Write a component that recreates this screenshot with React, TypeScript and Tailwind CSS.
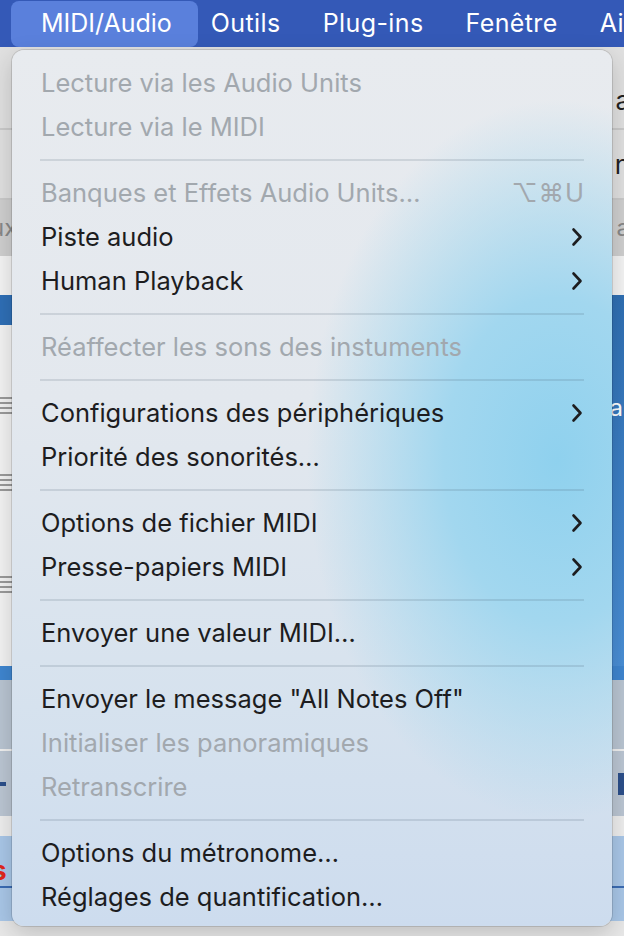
import React from "react";

type Item =
  | { kind: "sep" }
  | { kind: "item"; label: string; disabled?: boolean; sub?: boolean; shortcut?: string };

const items: Item[] = [
  { kind: "item", label: "Lecture via les Audio Units", disabled: true },
  { kind: "item", label: "Lecture via le MIDI", disabled: true },
  { kind: "sep" },
  { kind: "item", label: "Banques et Effets Audio Units…", disabled: true, shortcut: "⌥⌘U" },
  { kind: "item", label: "Piste audio", sub: true },
  { kind: "item", label: "Human Playback", sub: true },
  { kind: "sep" },
  { kind: "item", label: "Réaffecter les sons des instuments", disabled: true },
  { kind: "sep" },
  { kind: "item", label: "Configurations des périphériques", sub: true },
  { kind: "item", label: "Priorité des sonorités…" },
  { kind: "sep" },
  { kind: "item", label: "Options de fichier MIDI", sub: true },
  { kind: "item", label: "Presse-papiers MIDI", sub: true },
  { kind: "sep" },
  { kind: "item", label: "Envoyer une valeur MIDI…" },
  { kind: "sep" },
  { kind: "item", label: 'Envoyer le message "All Notes Off"' },
  { kind: "item", label: "Initialiser les panoramiques", disabled: true },
  { kind: "item", label: "Retranscrire", disabled: true },
  { kind: "sep" },
  { kind: "item", label: "Options du métronome…" },
  { kind: "item", label: "Réglages de quantification…" },
];

function Chevron() {
  return (
    <svg width="14" height="20" viewBox="0 0 14 20" fill="none">
      <path d="M3.5 2.5 L10.5 10 L3.5 17.5" stroke="#1d1d1f" strokeWidth="2.6" strokeLinecap="round" strokeLinejoin="round" />
    </svg>
  );
}

function Lines() {
  return (
    <div className="flex flex-col gap-[3px]">
      <div className="h-[2px] bg-[#9a9a9a]" />
      <div className="h-[2px] bg-[#9a9a9a]" />
      <div className="h-[2px] bg-[#9a9a9a]" />
      <div className="h-[2px] bg-[#9a9a9a]" />
    </div>
  );
}

export default function App() {
  return (
    <div
      className="relative w-[624px] h-[936px] overflow-hidden bg-[#e8e8e8]"
      style={{ fontFamily: "Inter, 'Noto Sans', sans-serif" }}
    >
      {/* Menu bar */}
      <div className="h-[47px] bg-[#3459b7] flex items-center text-white text-[25px] whitespace-nowrap">
        <div className="ml-[11px] h-[46px] w-[189px] rounded-[8px] bg-[#5a80dc] flex items-center pl-[30px]">MIDI/Audio</div>
        <div className="ml-[13px] tracking-[0.4px]">Outils</div>
        <div className="ml-[42px] tracking-[0.4px]">Plug-ins</div>
        <div className="ml-[42px] tracking-[0.4px]">Fenêtre</div>
        <div className="ml-[42px] tracking-[0.4px]">Ai</div>
      </div>

      {/* Background app content */}
      <div className="flex flex-col">
        <div className="h-[83px] bg-[#e0e0e0] border-b-2 border-[#cacaca] flex items-end justify-end pb-[8px] text-[26px] text-[#222]">
          <span className="mr-[-6px]">a</span>
        </div>
        <div className="h-[70px] bg-[#e0e0e0] border-b-2 border-[#cacaca] flex items-center justify-end text-[26px] text-[#222]">
          <span className="mr-[-6px]">n</span>
        </div>
        <div className="h-[56px] bg-[#cfcfcf] flex items-center justify-between text-[24px] text-[#888]">
          <span className="ml-[-10px]">ux</span>
          <span className="mr-[-6px]">a</span>
        </div>
        <div className="h-[39px] bg-[#f4f4f4]" />
        <div className="h-[371px] flex">
          <div className="w-[40px] flex flex-col bg-[#f3f3f3]">
            <div className="h-[30px] bg-[#2f6fb6]" />
            <div className="mt-[72px]"><Lines /></div>
            <div className="mt-[60px]"><Lines /></div>
            <div className="mt-[85px]"><Lines /></div>
          </div>
          <div className="flex-1 bg-[linear-gradient(180deg,#2f6fb3,#4a8fd6)] flex items-start justify-end pt-[95px] text-[24px] text-white">
            <span className="mr-[-8px]">ar</span>
          </div>
        </div>
        <div className="h-[14px] bg-[#3f86d0]" />
        <div className="h-[71px] bg-[#b9c5d2] border-b-2 border-[#f0f0f0]" />
        <div className="h-[65px] bg-[#bbc6d3] flex items-center justify-between">
          <div className="w-[6px] h-[4px] bg-[#2c4f8a]" />
          <div className="w-[6px] h-[22px] bg-[#2c4f8a]" />
        </div>
        <div className="h-[20px] bg-[#eeeeee]" />
        <div className="h-[50px] bg-[#a9c7e8] flex items-end">
          <span className="ml-[-8px] mb-[2px] text-[26px] font-bold text-[#e0261d] leading-none">s</span>
        </div>
        <div className="h-[2px] bg-[#3b6cb4]" />
        <div className="h-[33px] bg-[#a9c7e8]" />
      </div>

      {/* Dropdown menu */}
      <div
        className="absolute left-[12px] top-[50px] w-[600px] rounded-[12px] pt-[11px] pb-[7px] shadow-[0_0_0_1px_rgba(0,0,0,0.12),0_8px_24px_rgba(0,0,0,0.18)] bg-[radial-gradient(ellipse_250px_360px_at_545px_410px,#8fd1ee_0%,#a2d7ef_45%,rgba(200,225,240,0)_100%),linear-gradient(180deg,#e8ebef_0%,#e3e8ee_40%,#d6e2ee_75%,#cddcee_100%)]"
      >
        {items.map((it, i) =>
          it.kind === "sep" ? (
            <div key={i} className="h-[22px] flex items-center px-[28px]">
              <div className="h-[2px] w-full bg-[rgba(60,80,100,0.15)]" />
            </div>
          ) : (
            <div
              key={i}
              className={`h-[44px] flex items-center justify-between pl-[29px] pr-[28px] text-[25.5px] whitespace-nowrap ${
                it.disabled ? "text-[#a2a8ae]" : "text-[#1d1d1f]"
              }`}
            >
              <span>{it.label}</span>
              {it.sub ? <Chevron /> : null}
              {it.shortcut ? (
                <span className="text-[#a2a8ae] tracking-[1px] mr-[-1px]">{it.shortcut}</span>
              ) : null}
            </div>
          )
        )}
      </div>
    </div>
  );
}
